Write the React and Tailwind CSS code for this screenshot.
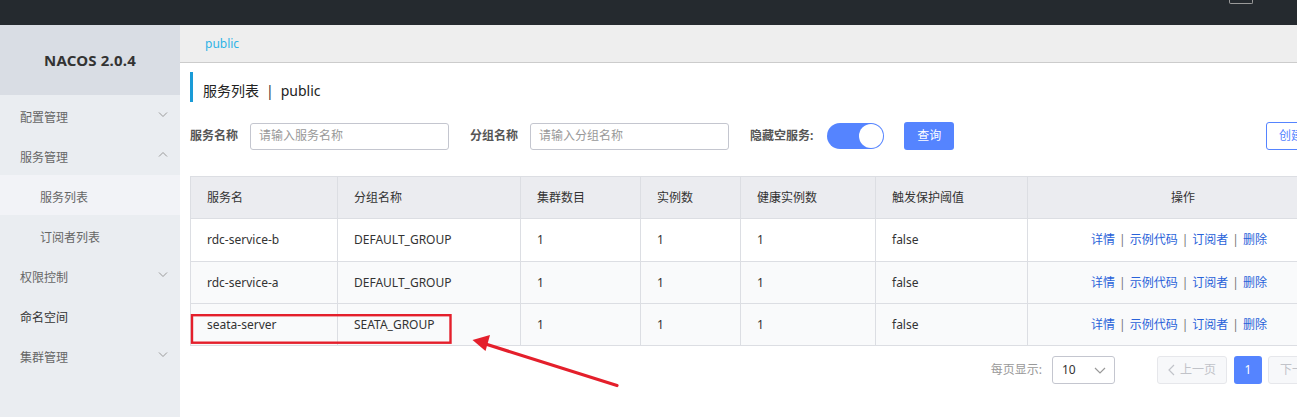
import React from 'react'

const FONT = { fontFamily: '"Noto Sans", "Noto Sans CJK SC", sans-serif' }

const MENU = [
  { label: '配置管理', arrow: 'down' },
  { label: '服务管理', arrow: 'up' },
  { label: '服务列表', sub: true, active: true },
  { label: '订阅者列表', sub: true },
  { label: '权限控制', arrow: 'down' },
  { label: '命名空间', dark: true },
  { label: '集群管理', arrow: 'down' },
]

const ROWS = [
  { name: 'rdc-service-b', group: 'DEFAULT_GROUP', bg: 'bg-white', h: 'h-[43px]' },
  { name: 'rdc-service-a', group: 'DEFAULT_GROUP', bg: 'bg-[#f9fafb]', h: 'h-[42px]' },
  { name: 'seata-server', group: 'SEATA_GROUP', bg: 'bg-[#f9fafb]', h: 'h-[42px]' },
]

const COLS = [
  { title: '服务名', w: 'w-[147px]' },
  { title: '分组名称', w: 'w-[183px]' },
  { title: '集群数目', w: 'w-[120px]' },
  { title: '实例数', w: 'w-[100px]' },
  { title: '健康实例数', w: 'w-[135px]' },
  { title: '触发保护阈值', w: 'w-[152px]' },
]

function Chevron({ dir }) {
  return (
    <svg width="10" height="6" viewBox="0 0 10 6" className="text-[#999]" fill="none" stroke="currentColor" strokeWidth="1">
      {dir === 'up' ? <path d="M1 5.5L5 1.5l4 4" /> : <path d="M1 0.5l4 4 4-4" />}
    </svg>
  )
}

function Actions() {
  return (
    <div className="flex items-center justify-center text-[12px] text-[#2962d9]">
      <span>详情</span>
      <span className="mx-[4px] text-[#777]">|</span>
      <span>示例代码</span>
      <span className="mx-[4px] text-[#777]">|</span>
      <span>订阅者</span>
      <span className="mx-[4px] text-[#777]">|</span>
      <span>删除</span>
    </div>
  )
}

export default function App() {
  return (
    <div className="relative w-[1297px] h-[417px] overflow-hidden bg-white text-[#333]" style={FONT}>
      {/* TOP BAR */}
      <div className="h-[25px] bg-[#252a2f] flex">
        <div className="ml-[1229px] w-[24px] h-[4px] border-x border-b border-[#9a9a9a] rounded-b-[2px]" />
      </div>

      <div className="flex h-[392px]">
        {/* SIDEBAR */}
        <aside className="w-[180px] shrink-0 bg-[#eaedf1]">
          <div className="h-[70px] bg-[#d9dde4] flex items-center justify-center">
            <span className="text-[15px] font-bold text-[#333] tracking-[0.2px]">NACOS 2.0.4</span>
          </div>
          {MENU.map((m) => (
            <div
              key={m.label}
              className={`h-[40px] flex items-center justify-between pt-[5px] pr-[12px] text-[12px] ${m.sub ? 'pl-[40px]' : 'pl-[20px]'} ${m.active ? 'bg-[#f2f3f7]' : ''} ${m.dark ? 'text-[#333]' : 'text-[#666]'}`}
            >
              <span>{m.label}</span>
              {m.arrow && (
                <span className={m.arrow === 'up' ? 'mb-[8px]' : 'mb-[6px]'}>
                  <Chevron dir={m.arrow} />
                </span>
              )}
            </div>
          ))}
        </aside>

        {/* MAIN */}
        <main className="flex-1 min-w-0">
          <div className="h-[38px] bg-[#eeeeee] border-b border-[#cccccc] flex items-center pl-[25px] w-[1170px]">
            <span className="text-[12px] text-[#2eb3e6]">public</span>
          </div>

          <div className="pl-[10px] w-[1160px]">
            {/* TITLE */}
            <div className="mt-[9px] h-[30px] border-l-[3px] border-[#1a9bd7] flex items-center pl-[10px] pt-[7px]">
              <span className="text-[14px] text-[#222]">服务列表</span>
              <span className="text-[14px] text-[#333] mx-[7px]">|</span>
              <span className="text-[14px] text-[#222]">public</span>
            </div>

            {/* SEARCH */}
            <div className="mt-[20px] flex items-center h-[28px]">
              <span className="text-[12px] font-bold text-[#555] w-[60px]">服务名称</span>
              <div className="w-[199px] h-[27px] border border-[#c4c6cf] rounded-[3px] flex items-center px-[8px] text-[12px] text-[#999]">
                请输入服务名称
              </div>
              <span className="ml-[21px] text-[12px] font-bold text-[#555] w-[60px]">分组名称</span>
              <div className="w-[199px] h-[27px] border border-[#c4c6cf] rounded-[3px] flex items-center px-[8px] text-[12px] text-[#999]">
                请输入分组名称
              </div>
              <span className="ml-[21px] text-[12px] font-bold text-[#555]">隐藏空服务:</span>
              <div className="ml-[14px] w-[57px] h-[26px] rounded-full bg-[#5584ff] flex items-center justify-end p-[1px]">
                <div className="w-[24px] h-[24px] rounded-full bg-white" />
              </div>
              <button className="ml-[20px] w-[50px] h-[28px] rounded-[3px] bg-[#5584ff] text-white text-[12px]">查询</button>
              <button className="ml-auto w-[74px] h-[28px] rounded-[3px] border border-[#5584ff] text-[#5584ff] text-[12px] bg-white">创建服务</button>
            </div>

            {/* TABLE */}
            <div className="mt-[26px] border-l border-t border-[#dcdee3] text-[12px]">
              <div className="flex h-[42px] bg-[#ebecf0] border-b border-[#dcdee3]">
                {COLS.map((c) => (
                  <div key={c.title} className={`${c.w} shrink-0 border-r border-[#dcdee3] flex items-center pl-[16px] text-[#333]`}>
                    {c.title}
                  </div>
                ))}
                <div className="flex-1 flex items-center justify-center text-[#333] pr-[2px]">操作</div>
              </div>
              {ROWS.map((r) => (
                <div key={r.name} className={`flex ${r.h} border-b border-[#dcdee3] ${r.bg}`}>
                  <div className="w-[147px] shrink-0 border-r border-[#dcdee3] flex items-center pl-[16px]">{r.name}</div>
                  <div className="w-[183px] shrink-0 border-r border-[#dcdee3] flex items-center pl-[16px]">{r.group}</div>
                  <div className="w-[120px] shrink-0 border-r border-[#dcdee3] flex items-center pl-[16px]">1</div>
                  <div className="w-[100px] shrink-0 border-r border-[#dcdee3] flex items-center pl-[16px]">1</div>
                  <div className="w-[135px] shrink-0 border-r border-[#dcdee3] flex items-center pl-[16px]">1</div>
                  <div className="w-[152px] shrink-0 border-r border-[#dcdee3] flex items-center pl-[16px]">false</div>
                  <div className="flex-1 flex items-center justify-center pr-[10px]">
                    <Actions />
                  </div>
                </div>
              ))}
            </div>

            {/* PAGINATION */}
            <div className="mt-[10px] flex items-center justify-end h-[28px] text-[12px]">
              <span className="text-[#999]">每页显示:</span>
              <div className="ml-[10px] w-[63px] h-[28px] border border-[#c4c6cf] rounded-[3px] flex items-center justify-between pl-[9px] pr-[8px]">
                <span className="text-[#333]">10</span>
                <svg width="12" height="7" viewBox="0 0 12 7" fill="none" stroke="#999" strokeWidth="1.2">
                  <path d="M1 1l5 5 5-5" />
                </svg>
              </div>
              <div className="ml-[42px] w-[70px] h-[28px] border border-[#e6e7eb] bg-[#f7f8fa] rounded-[3px] flex items-center justify-center gap-[5px] text-[#c1c3c9]">
                <svg width="7" height="12" viewBox="0 0 7 12" fill="none" stroke="#c1c3c9" strokeWidth="1.2">
                  <path d="M6 1L1 6l5 5" />
                </svg>
                <span>上一页</span>
              </div>
              <div className="ml-[7px] w-[28px] h-[28px] rounded-[3px] bg-[#5584ff] text-white flex items-center justify-center">1</div>
              <div className="ml-[6px] w-[72px] h-[28px] border border-[#e6e7eb] bg-[#f7f8fa] rounded-[3px] flex items-center justify-center gap-[5px] text-[#c1c3c9]">
                <span>下一页</span>
                <svg width="7" height="12" viewBox="0 0 7 12" fill="none" stroke="#c1c3c9" strokeWidth="1.2">
                  <path d="M1 1l5 5-5 5" />
                </svg>
              </div>
            </div>
          </div>
        </main>
      </div>

      {/* ANNOTATION */}
      <svg className="absolute left-0 top-0 pointer-events-none" width="1297" height="417" viewBox="0 0 1297 417">
        <rect x="192" y="315.2" width="258.5" height="27.5" fill="none" stroke="#e41f2b" strokeWidth="2.4" />
        <line x1="617" y1="385.5" x2="484" y2="343.5" stroke="#e41f2b" strokeWidth="3.2" strokeLinecap="round" />
        <polygon points="472.5,340 490,335 485.5,351" fill="#e41f2b" />
      </svg>
    </div>
  )
}
